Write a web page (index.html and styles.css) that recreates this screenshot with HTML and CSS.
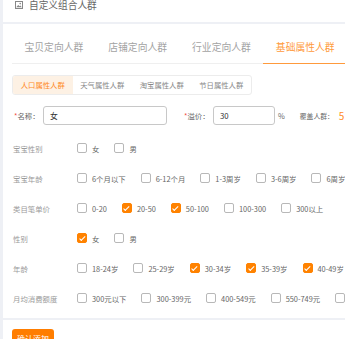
FILE: index.html
```html
<!DOCTYPE html>
<html lang="zh-CN">
<head>
    <meta charset="UTF-8">
    <title>自定义组合人群</title>
    <link rel="stylesheet" href="styles.css">
</head>
<body>
    <div class="header">
        <svg class="header-icon" width="8" height="8" viewBox="0 0 8 8">
            <rect x="0.5" y="0.5" width="7" height="7" fill="none" stroke="#888" stroke-width="1"/>
            <circle cx="5.2" cy="2.6" r="0.8" fill="#888"/>
            <path d="M1.2 6.3 L3.2 3.9 L4.6 5.3 L5.4 4.6 L6.8 6.3 Z" fill="#888"/>
        </svg>
        <span>自定义组合人群</span>
    </div>

    <div class="main">
        <div class="tabs">
            <div class="tab">宝贝定向人群</div>
            <div class="tab">店铺定向人群</div>
            <div class="tab">行业定向人群</div>
            <div class="tab active">基础属性人群</div>
        </div>

        <div class="subtabs">
            <div class="subtab active">人口属性人群</div>
            <div class="subtab">天气属性人群</div>
            <div class="subtab">淘宝属性人群</div>
            <div class="subtab">节日属性人群</div>
        </div>

        <div class="form-row">
            <label class="form-label"><i>*</i>名称：</label>
            <div class="input name-input">女</div>
            <label class="form-label premium-label"><i>*</i>溢价：</label>
            <div class="input premium-input">30</div>
            <span class="unit">%</span>
            <span class="cover-label">覆盖人群：</span>
            <span class="cover-value">5</span>
        </div>

        <div class="attr-list">
            <div class="attr-row">
                <div class="attr-name">宝宝性别</div>
                <div class="opt"><span class="cb"></span>女</div>
                <div class="opt"><span class="cb"></span>男</div>
            </div>
            <div class="attr-row">
                <div class="attr-name">宝宝年龄</div>
                <div class="opt"><span class="cb"></span>6个月以下</div>
                <div class="opt"><span class="cb"></span>6-12个月</div>
                <div class="opt"><span class="cb"></span>1-3周岁</div>
                <div class="opt"><span class="cb"></span>3-6周岁</div>
                <div class="opt"><span class="cb"></span>6周岁以上</div>
            </div>
            <div class="attr-row">
                <div class="attr-name">类目笔单价</div>
                <div class="opt"><span class="cb"></span>0-20</div>
                <div class="opt"><span class="cb checked"></span>20-50</div>
                <div class="opt"><span class="cb checked"></span>50-100</div>
                <div class="opt"><span class="cb"></span>100-300</div>
                <div class="opt"><span class="cb"></span>300以上</div>
            </div>
            <div class="attr-row">
                <div class="attr-name">性别</div>
                <div class="opt"><span class="cb checked"></span>女</div>
                <div class="opt"><span class="cb"></span>男</div>
            </div>
            <div class="attr-row">
                <div class="attr-name">年龄</div>
                <div class="opt"><span class="cb"></span>18-24岁</div>
                <div class="opt"><span class="cb"></span>25-29岁</div>
                <div class="opt"><span class="cb checked"></span>30-34岁</div>
                <div class="opt"><span class="cb checked"></span>35-39岁</div>
                <div class="opt"><span class="cb checked"></span>40-49岁</div>
            </div>
            <div class="attr-row">
                <div class="attr-name">月均消费额度</div>
                <div class="opt"><span class="cb"></span>300元以下</div>
                <div class="opt"><span class="cb"></span>300-399元</div>
                <div class="opt"><span class="cb"></span>400-549元</div>
                <div class="opt"><span class="cb"></span>550-749元</div>
                <div class="opt"><span class="cb"></span>750元以上</div>
            </div>
        </div>
    </div>

    <div class="footer">
        <button class="btn-add">确认添加</button>
    </div>
</body>
</html>
```

FILE: styles.css
```css
html, body {
    height: 100%;
}
body {
    margin: 0;
    padding-left: 3px;
    background-color: #eef0f5;
    font-family: "Noto Sans CJK SC", "Noto Sans", sans-serif;
    overflow: hidden;
    white-space: nowrap;
}
.header {
    background-color: #fff;
    height: 22px;
    padding-left: 12px;
    display: flex;
    align-items: flex-start;
    font-size: 9.7px;
    line-height: 10px;
    color: #666;
}
.header-icon {
    margin-top: 1px;
    margin-right: 6px;
}
.main {
    background-color: #fff;
    margin-top: 2px;
    padding: 8px 0 5px 9px;
}
.tabs {
    display: flex;
    border-bottom: 1px solid #efefef;
}
.tab {
    flex-shrink: 0;
    padding: 0 12.5px;
    height: 31px;
    line-height: 31px;
    font-size: 9.8px;
    color: #a3a3a3;
    border-bottom: 1px solid transparent;
    margin-bottom: -1px;
}
.tab.active {
    color: #ff9a3c;
    border-bottom-color: #ff9a3c;
}
.subtabs {
    display: inline-flex;
    margin-top: 11px;
    border: 1px solid #ececec;
    border-radius: 3px;
    overflow: hidden;
}
.subtab {
    width: 59.5px;
    height: 18px;
    line-height: 18px;
    text-align: center;
    font-size: 7.35px;
    color: #888;
}
.subtab.active {
    background-color: #fdf1e4;
    color: #ff8a1f;
}
.form-row {
    display: flex;
    align-items: center;
    margin-top: 11px;
    font-size: 7.4px;
    color: #666;
}
.form-row > * {
    flex-shrink: 0;
}
.form-label {
    width: 29px;
    padding-left: 2px;
}
.form-label i {
    font-style: normal;
    color: #f24c3d;
}
.input {
    box-sizing: border-box;
    height: 19px;
    line-height: 17px;
    border: 1px solid #c8c8c8;
    border-radius: 3px;
    padding-left: 6px;
    font-size: 7.8px;
    color: #333;
}
.name-input {
    width: 124px;
}
.premium-label {
    margin-left: 15px;
}
.premium-input {
    width: 62px;
}
.unit {
    margin-left: 3px;
}
.cover-label {
    margin-left: 15px;
    font-size: 6.8px;
}
.cover-value {
    margin-left: 5px;
    font-size: 10px;
    color: #ff8a1f;
}
.attr-list {
    margin-top: 8px;
}
.attr-row {
    display: flex;
    align-items: center;
    height: 30px;
    font-size: 7.4px;
}
.attr-name {
    flex-shrink: 0;
    width: 64px;
    padding-left: 1px;
    color: #9a9a9a;
}
.opt {
    flex-shrink: 0;
    display: flex;
    align-items: center;
    margin-right: 15px;
    color: #666;
}
.cb {
    flex-shrink: 0;
    box-sizing: border-box;
    width: 10px;
    height: 10px;
    border: 1px solid #b8b8b8;
    border-radius: 2px;
    margin-right: 5px;
    position: relative;
}
.cb.checked {
    background-color: #ff8200;
    border-color: #ff8200;
}
.cb.checked::after {
    content: "";
    position: absolute;
    left: 2.6px;
    top: 0.8px;
    width: 2.2px;
    height: 4.5px;
    border: solid #fff;
    border-width: 0 1.2px 1.2px 0;
    transform: rotate(45deg);
}
.footer {
    background-color: #fff;
    margin-top: 2px;
    height: 100%;
    padding: 9px 0 0 9px;
}
.btn-add {
    display: block;
    background-color: #ff7d00;
    color: #fff;
    border: none;
    border-radius: 3px;
    width: 42px;
    height: 20px;
    padding: 0;
    font-family: inherit;
    font-size: 8px;
    line-height: 20px;
}
```
